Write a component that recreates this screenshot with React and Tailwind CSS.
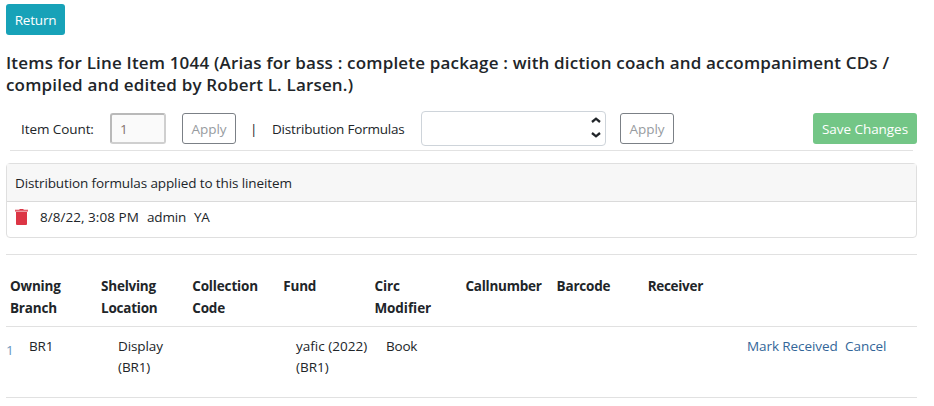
const COLUMNS = [
  { label: "Owning Branch", style: "tracking-[-0.2px]" },
  { label: "Shelving Location", style: "tracking-[-0.25px]" },
  { label: "Collection Code", style: "tracking-[-0.15px]" },
  { label: "Fund", style: "tracking-[-0.2px]" },
  { label: "Circ Modifier", style: "tracking-[-0.05px]" },
  { label: "Callnumber", style: "tracking-[-0.25px]" },
  { label: "Barcode", style: "tracking-[-0.2px]" },
  { label: "Receiver", style: "tracking-[-0.3px]" },
];

function TrashIcon() {
  return (
    <svg width="13" height="16" viewBox="0 0 13 16" className="block">
      <path d="M4.500 0h4v.8h4.500v.9H0V.8h4.500z" fill="#dc3545" />
      <path d="M0 1.700h13v1.300H0z" fill="#dc3545" opacity=".5" />
      <path d="M1 3h11v12q0 1-1 1H2q-1 0-1-1z" fill="#dc3545" />
    </svg>
  );
}

function ApplyButton() {
  return (
    <button className="flex h-[31px] w-[54px] shrink-0 items-center justify-center rounded-[3px] border border-[#7b8086] pt-px tracking-[-0.05px] text-[#979b9f]">
      Apply
    </button>
  );
}

export default function App() {
  return (
    <div
      className="h-[406px] w-[934px] overflow-hidden bg-white pt-1 pl-1.5 text-[13.5px] leading-[21px] tracking-[-0.2px] whitespace-nowrap text-[#212529]"
      style={{ fontFamily: '"Open Sans", "Noto Sans", sans-serif' }}
    >
      <button className="flex h-[31px] w-[59px] items-center justify-center rounded-[3px] bg-[#17a2b8] pt-px text-white">
        Return
      </button>

      <h3 className="mt-[17px] h-[44px] text-[17px] leading-[22px] font-semibold tracking-[0.175px]">
        Items for Line Item 1044 (Arias for bass : complete package : with diction coach and accompaniment CDs /
        <br />
        compiled and edited by Robert L. Larsen.)
      </h3>

      <div className="mt-[15px] flex h-[35px] w-[911px] items-center">
        <span className="ml-[15px] w-[89px] pt-px tracking-[-0.08px]">Item Count:</span>
        <input
          readOnly
          value="1"
          className="h-[31px] w-[56px] rounded-[3px] border-2 border-t-[#b9b9b9] border-r-[#cfcfcf] border-b-[#cfcfcf] border-l-[#b9b9b9] bg-[#fafafa] px-[8px] text-[#85726c] outline-none"
        />
        <div className="ml-4 flex">
          <ApplyButton />
        </div>
        <span className="ml-[14px] w-[22px] pt-px">|</span>
        <span className="w-[149px] pt-px">Distribution Formulas</span>
        <div className="flex h-[35px] w-[185px] flex-col items-end justify-center gap-[9px] rounded-[4px] border border-[#ced4da] pr-[4px] pb-[3px]">
          <svg width="10" height="6" viewBox="0 0 10 6" fill="none" stroke="#212529" strokeWidth="2.300">
            <path d="M1 5L5 1.700L9 5" />
          </svg>
          <svg width="10" height="6" viewBox="0 0 10 6" fill="none" stroke="#212529" strokeWidth="2.300">
            <path d="M1 1L5 4.300L9 1" />
          </svg>
        </div>
        <div className="ml-[14px] flex">
          <ApplyButton />
        </div>
        <button className="ml-auto flex h-[31px] w-[104px] items-center justify-center rounded-[3px] bg-[#73c686] pt-px tracking-[-0.05px] text-white">
          Save Changes
        </button>
      </div>
      <div className="mt-1 ml-1 h-px w-[903px] bg-[#e2e2e2]" />

      <div className="mt-3 h-[75px] w-[911px] rounded-[4px] border border-[#dfdfdf]">
        <div className="flex h-[38px] items-center border-b border-[#dadada] bg-[#f7f7f7] pl-2 pt-px tracking-[-0.11px]">
          Distribution formulas applied to this lineitem
        </div>
        <div className="flex h-[30px] items-center pl-2">
          <TrashIcon />
          <span className="ml-3 w-[107px] tracking-[0.04px]">8/8/22, 3:08 PM</span>
          <span className="w-[47px] tracking-[-0.15px]">admin</span>
          <span>YA</span>
        </div>
      </div>

      <div className="mt-4 w-[911px] border-y border-[#e1e1e1]">
        <div className="flex h-[71px] pt-[20px] pl-[4px] leading-[22px] font-bold">
          {COLUMNS.map((c) => (
            <div key={c.label} className="w-[91.1px] shrink-0 pr-[10px] whitespace-normal">
              <span className={c.style}>{c.label}</span>
            </div>
          ))}
        </div>
      </div>
      <div className="flex h-[71px] w-[911px] border-b border-[#e1e1e1] pt-[9px]">
        <span className="w-[23px] pt-1 text-[#6b96c0]">1</span>
        <span className="w-[89px]">BR1</span>
        <span className="w-[178px] tracking-[-0.1px]">
          Display
          <br />
          (BR1)
        </span>
        <span className="w-[90px] tracking-[0.02px]">
          yafic (2022)
          <br />
          (BR1)
        </span>
        <span className="w-[361px]">Book</span>
        <a className="w-[98px] tracking-[-0.08px] text-[#336699]">Mark Received</a>
        <a className="tracking-[-0.05px] text-[#336699]">Cancel</a>
      </div>
    </div>
  );
}
